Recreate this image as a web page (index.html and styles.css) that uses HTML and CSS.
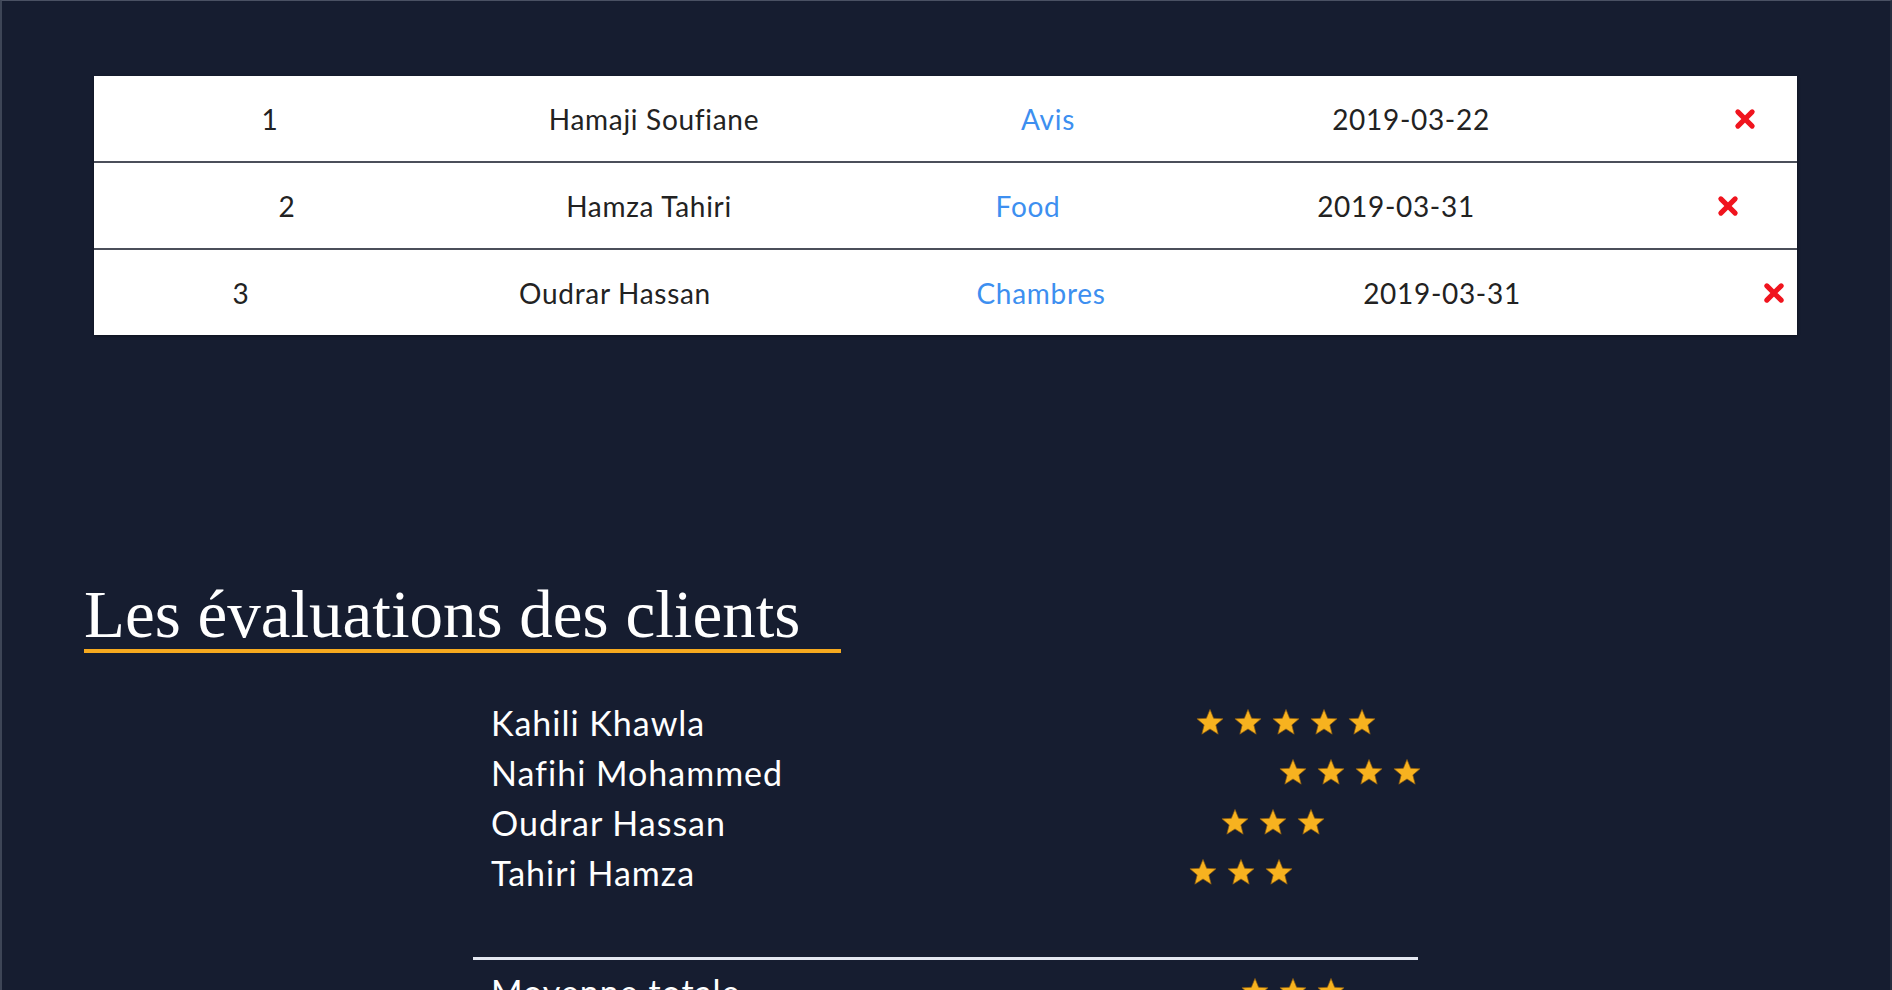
FILE: index.html
```html
<!DOCTYPE html>
<html lang="fr">
<head>
<meta charset="utf-8">
<title>Administration</title>
<link rel="stylesheet" href="styles.css">
</head>
<body>
<svg class="defs" width="0" height="0" aria-hidden="true">
  <defs>
    <symbol id="star" viewBox="0 0 24 24">
      <path d="M12 1.2l3.1 7.6 8.1.5-6.2 5.2 2 7.9L12 18l-7 4.4 2-7.9L.8 9.3l8.1-.5z"/>
    </symbol>
    <symbol id="cross" viewBox="0 0 20 20">
      <path d="M3.5 3.5L16.5 16.5M16.5 3.5L3.5 16.5"/>
    </symbol>
  </defs>
</svg>
<div class="page">
  <section class="orders">
    <div class="order order--a">
      <span class="order__cell">1</span>
      <span class="order__cell">Hamaji Soufiane</span>
      <a class="order__cell order__link" href="#">Avis</a>
      <span class="order__cell">2019-03-22</span>
      <span class="order__cell"><svg class="order__del"><use href="#cross"/></svg></span>
    </div>
    <div class="order order--b">
      <span class="order__cell">2</span>
      <span class="order__cell">Hamza Tahiri</span>
      <a class="order__cell order__link" href="#">Food</a>
      <span class="order__cell">2019-03-31</span>
      <span class="order__cell"><svg class="order__del"><use href="#cross"/></svg></span>
    </div>
    <div class="order order--c">
      <span class="order__cell">3</span>
      <span class="order__cell">Oudrar Hassan</span>
      <a class="order__cell order__link" href="#">Chambres</a>
      <span class="order__cell">2019-03-31</span>
      <span class="order__cell"><svg class="order__del"><use href="#cross"/></svg></span>
    </div>
  </section>

  <section class="reviews">
    <h2 class="reviews__title">Les évaluations des clients</h2>
    <div class="reviews__body">
      <ul class="reviews__list">
        <li class="review">
          <span class="review__name">Kahili Khawla</span>
          <span class="stars stars--r1">
            <svg class="star"><use href="#star"/></svg><svg class="star"><use href="#star"/></svg><svg class="star"><use href="#star"/></svg><svg class="star"><use href="#star"/></svg><svg class="star"><use href="#star"/></svg>
          </span>
        </li>
        <li class="review">
          <span class="review__name">Nafihi Mohammed</span>
          <span class="stars stars--r2">
            <svg class="star"><use href="#star"/></svg><svg class="star"><use href="#star"/></svg><svg class="star"><use href="#star"/></svg><svg class="star"><use href="#star"/></svg>
          </span>
        </li>
        <li class="review">
          <span class="review__name">Oudrar Hassan</span>
          <span class="stars stars--r3">
            <svg class="star"><use href="#star"/></svg><svg class="star"><use href="#star"/></svg><svg class="star"><use href="#star"/></svg>
          </span>
        </li>
        <li class="review">
          <span class="review__name">Tahiri Hamza</span>
          <span class="stars stars--r4">
            <svg class="star"><use href="#star"/></svg><svg class="star"><use href="#star"/></svg><svg class="star"><use href="#star"/></svg>
          </span>
        </li>
      </ul>
      <hr class="reviews__rule">
      <div class="review review--total">
        <span class="review__name">Moyenne totale</span>
        <span class="stars stars--total">
          <svg class="star"><use href="#star"/></svg><svg class="star"><use href="#star"/></svg><svg class="star"><use href="#star"/></svg>
        </span>
      </div>
    </div>
  </section>
</div>
</body>
</html>
```

FILE: styles.css
```css
* { box-sizing: border-box; }

html, body {
  margin: 0;
  padding: 0;
  background: #161d30;
}

body {
  font-family: "Lato", "Liberation Sans", sans-serif;
  overflow: hidden;
  height: 990px;
}

.defs { position: absolute; width: 0; height: 0; }

.page {
  min-height: 990px;
  border-top: 1px solid #4a5163;
  border-left: 2px solid #3d4556;
  border-right: 2px solid #262d3f;
  padding-top: 75px;
}

/* ---------- orders table ---------- */
.orders {
  margin: 0 93px 0 92px;
  background: #fff;
  box-shadow: 0 1px 3px rgba(0, 0, 0, 0.4);
}

.order {
  display: grid;
  align-items: center;
  height: 85px;
  font-size: 28px;
  color: #222;
  letter-spacing: 0.7px;
}

.order + .order { border-top: 2px solid #4b4f5a; height: 87px; }

.order--a { padding-left: 105px; grid-template-columns: 142px 626px 162px 564px 104px; }
.order--b { padding-left: 105px; grid-template-columns: 176px 548px 210px 526px 138px; }
.order--c { padding-left: 107px; grid-template-columns: 80px 668px 184px 618px 46px; }

.order__cell {
  text-align: center;
  display: flex;
  justify-content: center;
  align-items: center;
}

.order__link {
  color: #3d8ff0;
  text-decoration: none;
}

.order__del {
  width: 22px;
  height: 22px;
  fill: none;
  stroke: #f0141e;
  stroke-width: 4.6;
  stroke-linecap: round;
}

/* ---------- reviews ---------- */
.reviews {
  margin-top: 244px;
  padding-left: 82px;
}

.reviews__title {
  display: inline-block;
  width: 757px;
  margin: 0;
  font-family: "Liberation Serif", "Times New Roman", serif;
  font-weight: normal;
  font-size: 67px;
  line-height: 70px;
  color: #fff;
  border-bottom: 4px solid #f5a91f;
}

.reviews__body {
  width: 945px;
  margin: 44px 0 0 389px;
}

.reviews__list {
  list-style: none;
  margin: 0;
  padding: 0;
}

.review {
  display: flex;
  align-items: center;
  height: 50px;
  color: #fff;
  font-size: 34px;
  letter-spacing: 1px;
}

.review__name {
  flex: 0 0 723px;
  padding-left: 18px;
}

.stars {
  display: flex;
  gap: 10px;
}

.stars--r1 { margin-left: 0; }
.stars--r2 { margin-left: 83px; }
.stars--r3 { margin-left: 25px; }
.stars--r4 { margin-left: -7px; }
.stars--total { margin-left: 45px; }

.star {
  width: 28px;
  height: 28px;
  fill: #f7b21f;
  stroke: #8a5a10;
  stroke-width: 0.6;
}

.reviews__rule {
  margin: 60px 0 0;
  border: 0;
  height: 3px;
  background: #e4e8f1;
}

.review--total { height: 62px; }
```
